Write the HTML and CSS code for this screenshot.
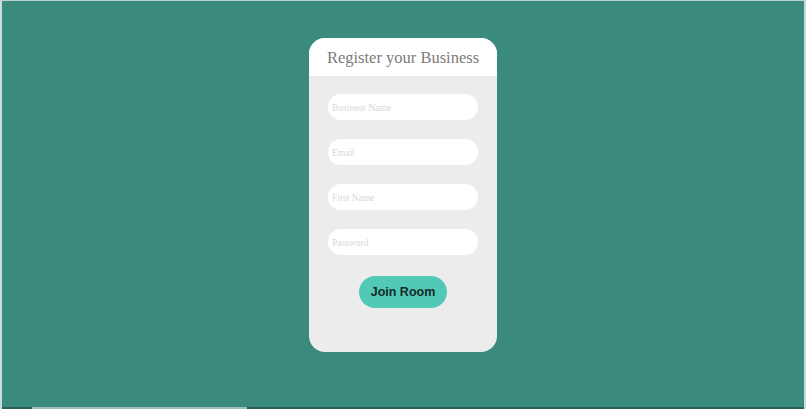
FILE: index.html
```html
<!DOCTYPE html>
<html>
<head>
<meta charset="utf-8">
<link rel="stylesheet" href="styles.css">
</head>
<body>
<div class="page">
  <div class="stage">
    <form class="card">
      <div class="card-head">Register your Business</div>
      <div class="card-body">
        <input class="field" type="text" placeholder="Business Name">
        <input class="field" type="text" placeholder="Email">
        <input class="field" type="text" placeholder="First Name">
        <input class="field" type="password" placeholder="Password">
        <button class="join" type="button">Join Room</button>
      </div>
    </form>
  </div>
  <div class="scrollbar"><div class="thumb"></div></div>
</div>
</body>
</html>
```
FILE: styles.css
```css
html, body {
  margin: 0;
  padding: 0;
  height: 100%;
  overflow: hidden;
}
.page {
  box-sizing: border-box;
  height: 409px;
  background: #3a8b7d;
  border-top: 1px solid #b9d3cd;
  border-left: 2px solid #c9dcd8;
  border-right: 2px solid #c9dcd8;
  display: flex;
  flex-direction: column;
}
.stage {
  flex: 1;
  display: flex;
  justify-content: center;
  padding-top: 37px;
}
.card {
  width: 188px;
  height: 314px;
  border-radius: 16px;
  overflow: hidden;
  background: #ececec;
  margin: 0;
  display: flex;
  flex-direction: column;
}
.card-head {
  height: 38px;
  background: #ffffff;
  display: flex;
  align-items: center;
  justify-content: center;
  font-family: "Liberation Serif", "Times New Roman", serif;
  font-size: 16.5px;
  color: #7c7c7c;
  padding-top: 1px;
  box-sizing: border-box;
}
.card-body {
  display: flex;
  flex-direction: column;
  align-items: center;
  padding-top: 18px;
}
.field {
  box-sizing: border-box;
  width: 150px;
  height: 26px;
  border: none;
  outline: none;
  border-radius: 13px;
  background: #ffffff;
  margin: 0 0 19px 0;
  padding: 1px 4px 0;
  font-family: "Liberation Serif", "Times New Roman", serif;
  font-size: 9.5px;
  color: #555;
}
.field::placeholder {
  color: #d8d8d8;
}
.join {
  margin-top: 2px;
  width: 88px;
  height: 32px;
  border: none;
  border-radius: 16px;
  background: #52c9b7;
  font-family: "Liberation Sans", Arial, sans-serif;
  font-weight: bold;
  font-size: 12.5px;
  color: #16292a;
  padding: 0;
}
.scrollbar {
  height: 2px;
  background: #2c5f56;
  display: flex;
}
.thumb {
  margin-left: 30px;
  width: 215px;
  background: #9fc0ba;
}
```
